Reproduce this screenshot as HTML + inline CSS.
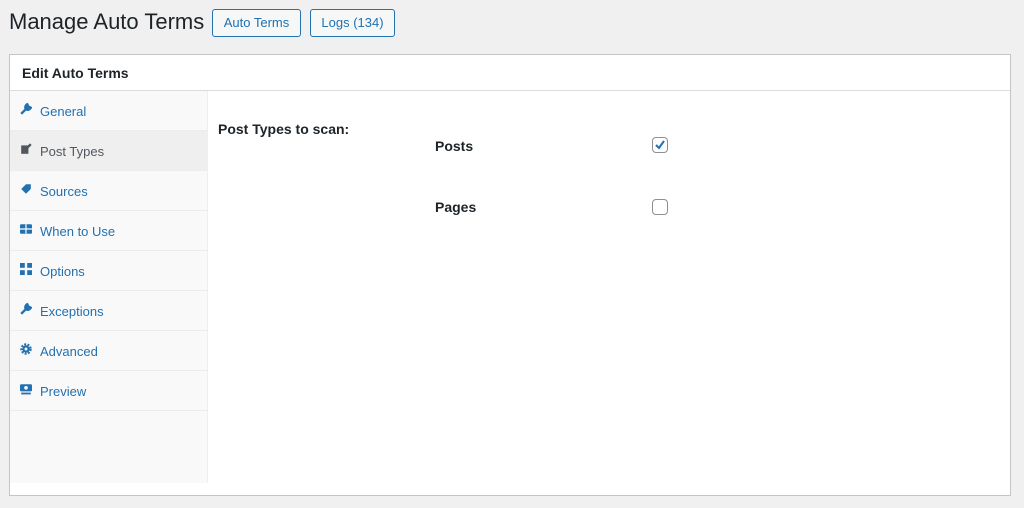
<!DOCTYPE html>
<html><head><style>
body{margin:0;background:#f0f0f1;font-family:"Liberation Sans",sans-serif;width:1024px;height:508px;overflow:hidden;position:relative;color:#1d2327}
.h1{position:absolute;left:9px;top:9px;font-size:22px;color:#1d2327}
.btn{position:absolute;top:9px;height:26px;border:1px solid #2271b1;border-radius:3px;color:#2271b1;font-size:13px;line-height:26px;text-align:center;background:#f6f7f7;box-sizing:content-box}
.panel{position:absolute;left:9px;top:54px;width:1000px;height:440px;background:#fff;border:1px solid #c3c4c7}
.hd{height:35px;border-bottom:1px solid #dcdcde;font-weight:bold;font-size:14px;line-height:36px;padding-left:12px}
.side{position:absolute;left:0;top:36px;width:197px;height:392px;background:#f9f9f9;border-right:1px solid #eee}
.it{height:39px;border-bottom:1px solid #ececec;font-size:13px;color:#2271b1;line-height:41px;padding-left:30px;position:relative}
.it.a{background:#efefef;color:#50575e}
.ic{position:absolute;left:10px;top:12px;width:12px;height:12px}
.lbl{position:absolute;font-weight:bold;font-size:14px}
.cb{position:absolute;width:14px;height:14px;border:1px solid #8c8f94;border-radius:4px;background:#fff}
</style></head><body>
<div class="h1">Manage Auto Terms</div>
<div class="btn" style="left:212px;width:87px">Auto Terms</div>
<div class="btn" style="left:310px;width:83px">Logs (134)</div>
<div class="panel">
<div class="hd">Edit Auto Terms</div>
<div class="side">
<div class="it"><svg class="ic" viewBox="0 0 10 10"><path d="M1 9L6 4M5 2a2 2 0 1 0 3 3L9 4 7 3 6 1z" stroke="#2271b1" stroke-width="2" fill="#2271b1"/></svg>General</div>
<div class="it a"><svg class="ic" viewBox="0 0 10 10"><rect x="1" y="2" width="6" height="7" fill="#50575e"/><path d="M5 5l4-4" stroke="#50575e" stroke-width="2"/></svg>Post Types</div>
<div class="it"><svg class="ic" viewBox="0 0 10 10"><path d="M5 1h4v4L5 9 1 5z" fill="#2271b1"/></svg>Sources</div>
<div class="it"><svg class="ic" viewBox="0 0 10 10"><rect x="0" y="1" width="10" height="8" rx="1" fill="#2271b1"/><path d="M5 1v8M0 5h10" stroke="#fff"/></svg>When to Use</div>
<div class="it"><svg class="ic" viewBox="0 0 10 10"><rect x="0" y="0" width="4" height="4" fill="#2271b1"/><rect x="6" y="0" width="4" height="4" fill="#2271b1"/><rect x="0" y="6" width="4" height="4" fill="#2271b1"/><rect x="6" y="6" width="4" height="4" fill="#2271b1"/></svg>Options</div>
<div class="it"><svg class="ic" viewBox="0 0 10 10"><path d="M1 9L6 4M5 2a2 2 0 1 0 3 3L9 4 7 3 6 1z" stroke="#2271b1" stroke-width="2" fill="#2271b1"/></svg>Exceptions</div>
<div class="it"><svg class="ic" viewBox="0 0 10 10"><circle cx="5" cy="5" r="3.5" fill="none" stroke="#2271b1" stroke-width="2.5" stroke-dasharray="1.5 1"/><circle cx="5" cy="5" r="3" fill="#2271b1"/><circle cx="5" cy="5" r="1.2" fill="#f9f9f9"/></svg>Advanced</div>
<div class="it"><svg class="ic" viewBox="0 0 10 10"><rect x="0" y="1" width="10" height="6" rx="1" fill="#2271b1"/><circle cx="5" cy="4" r="1.5" fill="#fff"/><rect x="1" y="8" width="8" height="1.5" fill="#2271b1"/></svg>Preview</div>
</div>
<div class="lbl" style="left:208px;top:66px">Post Types to scan:</div>
<div class="lbl" style="left:425px;top:83px">Posts</div>
<div class="lbl" style="left:425px;top:144px">Pages</div>
<div class="cb" style="left:642px;top:82px"><svg width="14" height="14" viewBox="0 0 14 14"><path d="M3 7l3 3 5-7" stroke="#2271b1" stroke-width="2" fill="none"/></svg></div>
<div class="cb" style="left:642px;top:144px"></div>
</div>
</body></html>
